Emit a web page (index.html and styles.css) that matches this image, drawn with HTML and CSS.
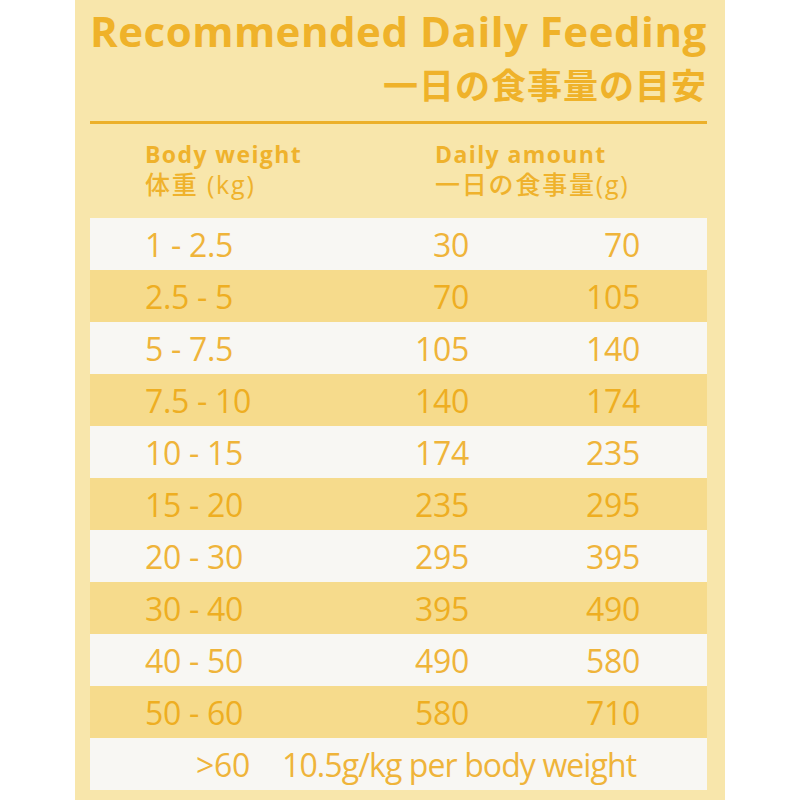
FILE: index.html
```html
<!DOCTYPE html>
<html lang="en">
<head>
<meta charset="utf-8">
<title>Recommended Daily Feeding</title>
<link rel="stylesheet" href="styles.css">
</head>
<body>
<main class="panel">
  <header class="head">
    <h1 class="title">Recommended Daily Feeding</h1>
    <p class="title-jp">一日の食事量の目安</p>
  </header>
  <div class="cols">
    <div class="col-head">
      <span class="en">Body weight</span>
      <span class="jp">体重 (kg)</span>
    </div>
    <div class="col-head">
      <span class="en">Daily amount</span>
      <span class="jp">一日の食事量(g)</span>
    </div>
  </div>
  <div class="table">
    <div class="row"><span class="w">1 - 2.5</span><span class="a">30</span><span class="b">70</span></div>
    <div class="row alt"><span class="w">2.5 - 5</span><span class="a">70</span><span class="b">105</span></div>
    <div class="row"><span class="w">5 - 7.5</span><span class="a">105</span><span class="b">140</span></div>
    <div class="row alt"><span class="w">7.5 - 10</span><span class="a">140</span><span class="b">174</span></div>
    <div class="row"><span class="w">10 - 15</span><span class="a">174</span><span class="b">235</span></div>
    <div class="row alt"><span class="w">15 - 20</span><span class="a">235</span><span class="b">295</span></div>
    <div class="row"><span class="w">20 - 30</span><span class="a">295</span><span class="b">395</span></div>
    <div class="row alt"><span class="w">30 - 40</span><span class="a">395</span><span class="b">490</span></div>
    <div class="row"><span class="w">40 - 50</span><span class="a">490</span><span class="b">580</span></div>
    <div class="row alt"><span class="w">50 - 60</span><span class="a">580</span><span class="b">710</span></div>
    <div class="row last"><span class="gt">&gt;60</span><span class="note">10.5g/kg per body weight</span></div>
  </div>
</main>
</body>
</html>
```

FILE: styles.css
```css
html, body {
  margin: 0;
  padding: 0;
  background: #ffffff;
}

body {
  font-family: "Open Sans", "Noto Sans CJK JP", sans-serif;
  color: #efb22c;
}

.panel {
  width: 650px;
  height: 800px;
  margin: 0 auto;
  box-sizing: border-box;
  background: #f8e6ab;
  padding: 0 18px 0 15px;
  overflow: hidden;
}

.head {
  border-bottom: 3px solid #ecb02a;
  padding: 8px 0 15px;
  text-align: right;
}

.title {
  margin: 0;
  font-size: 42px;
  line-height: 46px;
  font-weight: 700;
  letter-spacing: 0.5px;
  text-align: left;
  white-space: nowrap;
  color: #efb22a;
}

.title-jp {
  margin: 8px 0 0;
  font-family: "Noto Sans CJK JP", sans-serif;
  font-size: 35px;
  line-height: 44px;
  font-weight: 700;
  letter-spacing: 1px;
  color: #efb22a;
}

.cols {
  display: grid;
  grid-template-columns: 290px 1fr;
  padding: 16px 0 0 55px;
  height: 94px;
  box-sizing: border-box;
}

.col-head {
  display: flex;
  flex-direction: column;
}

.col-head .en {
  font-size: 23px;
  line-height: 28px;
  font-weight: 700;
  letter-spacing: 1.4px;
  white-space: nowrap;
}

.col-head .jp {
  margin-top: 2px;
  font-family: "Open Sans", "Noto Sans CJK JP", sans-serif;
  font-size: 25px;
  line-height: 28px;
  font-weight: 500;
  letter-spacing: 1.8px;
  white-space: nowrap;
}

.table {
  display: flex;
  flex-direction: column;
}

.row {
  display: grid;
  grid-template-columns: 200px 124px 171px;
  align-items: center;
  height: 52px;
  padding-left: 55px;
  background: #f8f7f3;
  font-size: 32px;
  font-weight: 400;
  letter-spacing: -0.3px;
  color: #efb43a;
}

.row.alt {
  background: #f6db8c;
  color: #eeae22;
}

.row .a, .row .b {
  text-align: right;
}

.row.last {
  grid-template-columns: 105px 1fr;
  column-gap: 32px;
}

.row.last .gt {
  text-align: right;
}

.row.last .note {
  letter-spacing: -0.9px;
}
```
